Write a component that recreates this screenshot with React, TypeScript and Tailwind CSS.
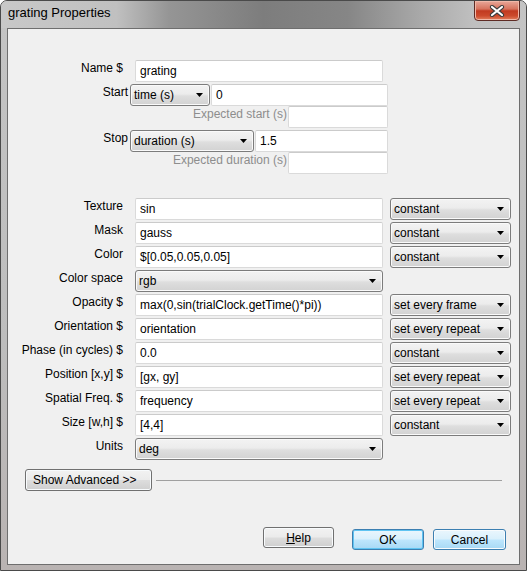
import React from "react"

const font = "font-['Liberation_Sans',Arial,sans-serif] text-[12px] leading-[14px]"

function Arrow() {
  return (
    <svg width="7" height="4" viewBox="0 0 7 4" className="shrink-0">
      <polygon points="0,0 7,0 3.5,4" fill="#000" />
    </svg>
  )
}

function TextBox({ value, className = "" }: { value: string; className?: string }) {
  return (
    <div
      className={`h-[22px] flex items-center pl-[4px] bg-white border border-[#dadada] border-t-[#cbcbcb] rounded-[2px] text-black whitespace-nowrap overflow-hidden ${className}`}
    >
      {value}
    </div>
  )
}

function Choice({ value, className = "" }: { value: string; className?: string }) {
  return (
    <div
      className={`h-[22px] flex items-center justify-between pl-[3px] pr-[6px] border border-[#7c7c7c] rounded-[3px] bg-[linear-gradient(#f3f3f3_0%,#ececec_45%,#dedede_55%,#d2d2d2_100%)] shadow-[inset_0_0_0_1px_#fafafa] text-black whitespace-nowrap ${className}`}
    >
      <span>{value}</span>
      <Arrow />
    </div>
  )
}

function Button({
  children,
  className = "",
  blue = false,
  focus = false,
}: {
  children: React.ReactNode
  className?: string
  blue?: boolean
  focus?: boolean
}) {
  const skin = blue
    ? "border-[#3c7fb1] bg-[linear-gradient(#eaf6fd_0%,#d9f0fc_48%,#bee6fd_52%,#a7d9f5_100%)]"
    : "border-[#707070] bg-[linear-gradient(#f2f2f2_0%,#ebebeb_48%,#dddddd_52%,#cfcfcf_100%)]"
  const ring = focus ? "shadow-[inset_0_0_0_1px_#5fc4f2]" : "shadow-[inset_0_0_0_1px_#f8fbfd]"
  return (
    <div className={`h-[21px] flex items-center justify-center border rounded-[3px] text-black ${skin} ${ring} ${className}`}>
      {children}
    </div>
  )
}

const rows: { label: string; value: string; kind: "text" | "select"; update?: string }[] = [
  { label: "Texture", value: "sin", kind: "text", update: "constant" },
  { label: "Mask", value: "gauss", kind: "text", update: "constant" },
  { label: "Color", value: "$[0.05,0.05,0.05]", kind: "text", update: "constant" },
  { label: "Color space", value: "rgb", kind: "select" },
  { label: "Opacity $", value: "max(0,sin(trialClock.getTime()*pi))", kind: "text", update: "set every frame" },
  { label: "Orientation $", value: "orientation", kind: "text", update: "set every repeat" },
  { label: "Phase (in cycles) $", value: "0.0", kind: "text", update: "constant" },
  { label: "Position [x,y] $", value: "[gx, gy]", kind: "text", update: "set every repeat" },
  { label: "Spatial Freq. $", value: "frequency", kind: "text", update: "set every repeat" },
  { label: "Size [w,h] $", value: "[4,4]", kind: "text", update: "constant" },
  { label: "Units", value: "deg", kind: "select" },
]

export default function App() {
  return (
    <div className={`w-[527px] h-[571px] ${font}`}>
      <div className="w-[527px] h-[571px] flex flex-col border border-[#4a4a4a] rounded-t-[7px] bg-[linear-gradient(180deg,#c4c4c4_0%,#bdbdbd_60%,#b9b3b2_100%)] overflow-hidden">
        {/* title bar */}
        <div className="relative h-[27px] shrink-0 bg-[linear-gradient(90deg,#c8c8c8_0%,#c0c0c0_22%,#959595_32%,#7d7d7d_50%,#868686_66%,#a9a9a9_80%,#bfbfbf_90%,#c4c4c4_100%)]">
          <div className="absolute left-[7px] top-[4px] text-[13px] leading-[16px] text-black">grating Properties</div>
          <div className="absolute right-[6px] top-[-1px] w-[46px] h-[21px] border border-[#5e2b24] rounded-b-[4px] bg-[linear-gradient(#e8a89a_0%,#d6735e_42%,#c13a20_52%,#cc4a2c_78%,#e2815f_100%)] shadow-[inset_0_0_0_1px_#f0b8a8] flex items-center justify-center">
            <svg width="16" height="12" viewBox="0 0 16 12">
              <path d="M3 2 L13 10 M13 2 L3 10" stroke="#3d3d3d" strokeWidth="4.2" strokeLinecap="round" />
              <path d="M3 2 L13 10 M13 2 L3 10" stroke="#ffffff" strokeWidth="2.2" strokeLinecap="round" />
            </svg>
          </div>
        </div>

        {/* client area */}
        <div className="mx-[6px] w-[513px] h-[537px] border border-[#6e6e6e] bg-[#f0f0f0] flex flex-col">
          <div className="pt-[31px] flex flex-col">
            <div className="flex h-[22px]">
              <div className="w-[115px] text-right pt-[1px]">Name $</div>
              <TextBox value="grating" className="ml-[12px] w-[248px]" />
            </div>
            <div className="flex h-[22px] mt-[2px]">
              <div className="w-[120px] text-right pt-[1px]">Start</div>
              <Choice value="time (s)" className="ml-[2px] w-[80px]" />
              <TextBox value="0" className="ml-[1px] w-[177px]" />
            </div>
            <div className="flex h-[22px]">
              <div className="w-[279px] text-right pt-[1px] text-[#8d8d8d]">Expected start (s)</div>
              <TextBox value="" className="ml-[1px] w-[100px]" />
            </div>
            <div className="flex h-[22px] mt-[2px]">
              <div className="w-[120px] text-right pt-[1px]">Stop</div>
              <Choice value="duration (s)" className="ml-[2px] w-[124px]" />
              <TextBox value="1.5" className="ml-[1px] w-[133px]" />
            </div>
            <div className="flex h-[22px]">
              <div className="w-[279px] text-right pt-[1px] text-[#8d8d8d]">Expected duration (s)</div>
              <TextBox value="" className="ml-[1px] w-[100px]" />
            </div>
          </div>

          <div className="mt-[24px] flex flex-col gap-[2px]">
            {rows.map((r) => (
              <div key={r.label} className="flex h-[22px]">
                <div className="w-[115px] text-right pt-[1px] whitespace-nowrap">{r.label}</div>
                {r.kind === "text" ? (
                  <TextBox value={r.value} className="ml-[12px] w-[248px]" />
                ) : (
                  <Choice value={r.value} className="ml-[12px] w-[248px]" />
                )}
                {r.update && <Choice value={r.update} className="ml-[7px] w-[121px]" />}
              </div>
            ))}
          </div>

          <div className="mt-[9px] flex items-center">
            <Button className="ml-[17px] w-[127px] h-[22px] justify-start pl-[7px]">Show Advanced &gt;&gt;</Button>
            <div className="ml-[4px] w-[346px] h-px bg-[#a0a0a0]" />
          </div>

          <div className="mt-[36px] flex items-start">
            <Button className="ml-[255px] w-[71px]">
              <span>
                <span className="underline">H</span>elp
              </span>
            </Button>
            <Button blue focus className="ml-[18px] mt-[2px] w-[72px]">
              OK
            </Button>
            <Button blue className="ml-[9px] mt-[2px] w-[73px]">
              Cancel
            </Button>
          </div>
        </div>
      </div>
    </div>
  )
}
